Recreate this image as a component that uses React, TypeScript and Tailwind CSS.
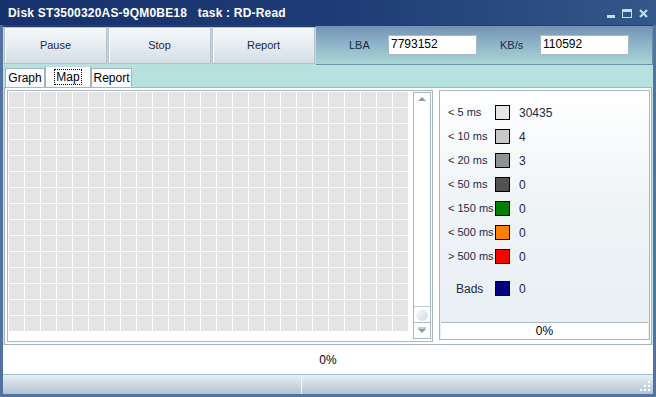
import React from "react";

const legend = [
  { label: "< 5 ms", color: "bg-[#e4e4e4]", value: "30435" },
  { label: "< 10 ms", color: "bg-[#c8c8c8]", value: "4" },
  { label: "< 20 ms", color: "bg-[#919191]", value: "3" },
  { label: "< 50 ms", color: "bg-[#525252]", value: "0" },
  { label: "< 150 ms", color: "bg-[#008000]", value: "0" },
  { label: "< 500 ms", color: "bg-[#ff8000]", value: "0" },
  { label: "> 500 ms", color: "bg-[#ff0000]", value: "0" },
];

const cells = Array.from({ length: 25 * 15 });

function ToolButton({ label }: { label: string }) {
  return (
    <button className="w-[103px] h-[37px] border border-[#b4c0cc] bg-gradient-to-b from-[#f4f7fa] via-[#e6ecf1] to-[#d5dee6] text-[11px] text-[#1c2847] shadow-[inset_1px_1px_0_#ffffff]">
      {label}
    </button>
  );
}

export default function App() {
  return (
    <div
      className="w-[656px] h-[397px] flex flex-col bg-[#52729f] overflow-hidden"
      style={{ fontFamily: "'Liberation Sans', Arial, sans-serif" }}
    >
      {/* title bar */}
      <div className="h-[25px] shrink-0 flex items-center justify-between pl-[8px] pr-[8px] bg-gradient-to-r from-[#17326d] via-[#1d3b76] to-[#34578a]">
        <span className="text-white text-[12px] font-bold tracking-[0.2px] whitespace-pre">
          Disk ST3500320AS-9QM0BE18   task : RD-Read
        </span>
        <div className="flex items-center gap-[7px] pt-[1px]">
          <div className="w-[8px] h-[3px] bg-[#b9e2ec] mt-[7px]" />
          <div className="w-[10px] h-[9px] border border-[#b9e2ec] border-t-[3px]" />
          <svg width="9" height="9" viewBox="0 0 9 9">
            <path d="M1 1 L8 8 M8 1 L1 8" stroke="#b9e2ec" strokeWidth="2.2" />
          </svg>
        </div>
      </div>

      <div className="flex-1 flex flex-col mx-[3px] mb-[3px] bg-gradient-to-b from-[#b2dfdc] to-[#c9ece9]">
        {/* toolbar */}
        <div className="h-[41px] shrink-0 flex items-start bg-gradient-to-b from-[#21407a] from-[5%] to-[#b8e1de] to-[5%]">
          <div className="flex gap-[1px] pl-[1px] pt-[2px]">
            <ToolButton label="Pause" />
            <ToolButton label="Stop" />
            <ToolButton label="Report" />
          </div>
          <div className="flex-1 ml-[1px] mt-[1px] h-[39px] border-r border-b border-[#6d8fae] bg-gradient-to-b from-[#7492b4] via-[#8fb6c9] to-[#a9d6d6] flex items-center text-[11px] text-[#1c2847]">
            <span className="ml-[33px] w-[39px]">LBA</span>
            <div className="w-[89px] h-[20px] bg-white border border-[#a9b8c6] text-[12px] text-black pl-[2px] leading-[17px]">
              7793152
            </div>
            <span className="ml-[23px] w-[40px]">KB/s</span>
            <div className="w-[89px] h-[20px] bg-white border border-[#a9b8c6] text-[12px] text-black pl-[2px] leading-[17px]">
              110592
            </div>
          </div>
        </div>

        {/* tabs */}
        <div className="h-[21px] shrink-0 flex items-end pl-[2px] text-[12px] text-black">
          <div className="w-[40px] h-[19px] bg-[#fafcfd] border border-b-0 border-[#a6b2be] flex items-center justify-center">
            Graph
          </div>
          <div className="w-[46px] h-[21px] bg-white border border-b-0 border-[#a6b2be] border-t-[#c5d8e8] flex items-center justify-center">
            <span className="outline outline-1 outline-dotted outline-black leading-[14px] px-[1px]">Map</span>
          </div>
          <div className="w-[41px] h-[19px] bg-[#fafcfd] border border-b-0 border-[#a6b2be] flex items-center justify-center">
            Report
          </div>
        </div>

        {/* tab page */}
        <div className="h-[258px] shrink-0 ml-[1px] mr-[1px] bg-white border border-[#a6b4c2] flex items-start pt-[2px] pl-[2px] gap-[6px]">
          <div className="w-[426px] h-[252px] border border-[#a9b6c3] p-[1px] flex items-start">
            <div className="grid grid-cols-[repeat(25,15px)] auto-rows-[15px] gap-px bg-white">
              {cells.map((_, i) => (
                <div key={i} className="bg-[#e4e4e4]" />
              ))}
            </div>
            <div className="ml-[5px] w-[18px] h-[247px] border border-[#a9b6c3] bg-white flex flex-col items-center justify-between">
              <svg width="16" height="14" viewBox="0 0 16 14">
                <path d="M4 8 L8 4 L12 8 Z" fill="#8d9aa8" />
              </svg>
              <div className="flex flex-col w-full">
                <div className="h-[16px] border-t border-[#c0cad4] flex items-center justify-center">
                  <div className="w-[12px] h-[12px] rounded-full bg-gradient-to-br from-white to-[#c9d7e3]" />
                </div>
                <div className="h-[16px] border-t border-[#a9b6c3] flex items-center justify-center">
                  <svg width="12" height="8" viewBox="0 0 12 8">
                    <path d="M2 2 L10 2 L6 6 Z" fill="#8d9aa8" />
                    <path d="M2 1 L10 1" stroke="#8d9aa8" />
                  </svg>
                </div>
              </div>
            </div>
          </div>

          <div className="w-[211px] h-[250px] border border-[#a9b6c3] bg-gradient-to-b from-white via-[#eef3f6] to-[#e8eff3] flex flex-col text-[11px] text-[#1c2847]">
            <div className="flex flex-col pt-[14px] pl-[8px] gap-[9px]">
              {legend.map((row) => (
                <div key={row.label} className="flex items-center h-[15px]">
                  <span className="w-[47px] whitespace-nowrap">{row.label}</span>
                  <div className={`w-[15px] h-[15px] shrink-0 border border-black ${row.color}`} />
                  <span className="ml-[9px] text-[12px]">{row.value}</span>
                </div>
              ))}
              <div className="flex items-center h-[15px] mt-[8px]">
                <span className="w-[47px] pl-[8px] text-[12px]">Bads</span>
                <div className="w-[15px] h-[15px] border border-black bg-[#000080]" />
                <span className="ml-[9px] text-[12px]">0</span>
              </div>
            </div>
            <div className="mt-auto mx-[1px] h-[17px] bg-white border-t border-[#a9b6c3] flex items-center justify-center text-[12px] text-black">
              0%
            </div>
          </div>
        </div>

        {/* status box */}
        <div className="h-[30px] shrink-0 bg-white border-b border-[#a4bccb] flex items-center justify-center text-[12px] text-black">
          0%
        </div>

        {/* status bar */}
        <div className="flex-1 flex bg-gradient-to-b from-[#e8f0f5] to-[#b1c3d2]">
          <div className="w-[299px] border-r border-[#f4f8fb]" />
          <div className="flex-1 flex items-end justify-end pr-[2px] pb-[2px]">
            <svg width="11" height="11" viewBox="0 0 11 11">
              <rect x="8" y="0" width="2" height="2" fill="#ffffff" />
              <rect x="4" y="4" width="2" height="2" fill="#ffffff" />
              <rect x="8" y="4" width="2" height="2" fill="#ffffff" />
              <rect x="0" y="8" width="2" height="2" fill="#ffffff" />
              <rect x="4" y="8" width="2" height="2" fill="#ffffff" />
              <rect x="8" y="8" width="2" height="2" fill="#ffffff" />
            </svg>
          </div>
        </div>
      </div>
    </div>
  );
}
